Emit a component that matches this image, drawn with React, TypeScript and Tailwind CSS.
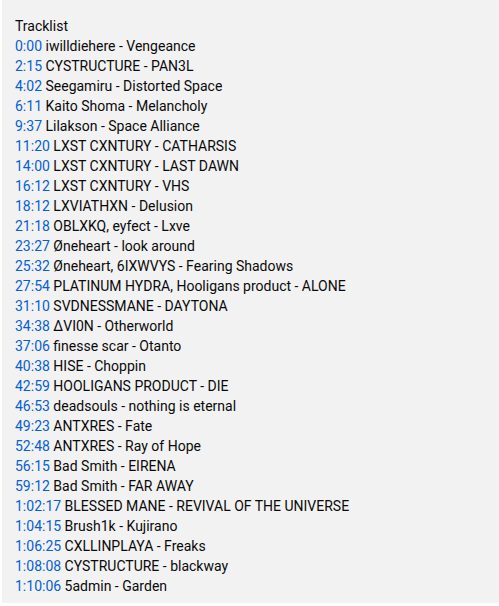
const tracks: [string, string][] = [
  ["0:00", "iwilldiehere - Vengeance"],
  ["2:15", "CYSTRUCTURE - PAN3L"],
  ["4:02", "Seegamiru - Distorted Space"],
  ["6:11", "Kaito Shoma - Melancholy"],
  ["9:37", "Lilakson - Space Alliance"],
  ["11:20", "LXST CXNTURY - CATHARSIS"],
  ["14:00", "LXST CXNTURY - LAST DAWN"],
  ["16:12", "LXST CXNTURY - VHS"],
  ["18:12", "LXVIATHXN - Delusion"],
  ["21:18", "OBLXKQ, eyfect - Lxve"],
  ["23:27", "Øneheart - look around"],
  ["25:32", "Øneheart, 6IXWVYS - Fearing Shadows"],
  ["27:54", "PLATINUM HYDRA, Hooligans product - ALONE"],
  ["31:10", "SVDNESSMANE - DAYTONA"],
  ["34:38", "ΔVI0N - Otherworld"],
  ["37:06", "finesse scar - Otanto"],
  ["40:38", "HISE - Choppin"],
  ["42:59", "HOOLIGANS PRODUCT - DIE"],
  ["46:53", "deadsouls - nothing is eternal"],
  ["49:23", "ANTXRES - Fate"],
  ["52:48", "ANTXRES - Ray of Hope"],
  ["56:15", "Bad Smith - EIRENA"],
  ["59:12", "Bad Smith - FAR AWAY"],
  ["1:02:17", "BLESSED MANE - REVIVAL OF THE UNIVERSE"],
  ["1:04:15", "Brush1k - Kujirano"],
  ["1:06:25", "CXLLINPLAYA - Freaks"],
  ["1:08:08", "CYSTRUCTURE - blackway"],
  ["1:10:06", "5admin - Garden"],
]

export default function App() {
  return (
    <div className="w-[499px] h-[606px] bg-white pl-[2px] pb-[3px]">
      <div className="h-full bg-[#f2f2f2] pl-[13px] pt-[16px] text-[14px] leading-[20px] text-[#0a0a0a] [font-family:Roboto,'Liberation_Sans',sans-serif]">
        <div>Tracklist</div>
        {tracks.map(([time, title]) => (
          <div key={time} className="whitespace-nowrap">
            <span className="text-[#065fd4]">{time}</span> {title}
          </div>
        ))}
      </div>
    </div>
  )
}
